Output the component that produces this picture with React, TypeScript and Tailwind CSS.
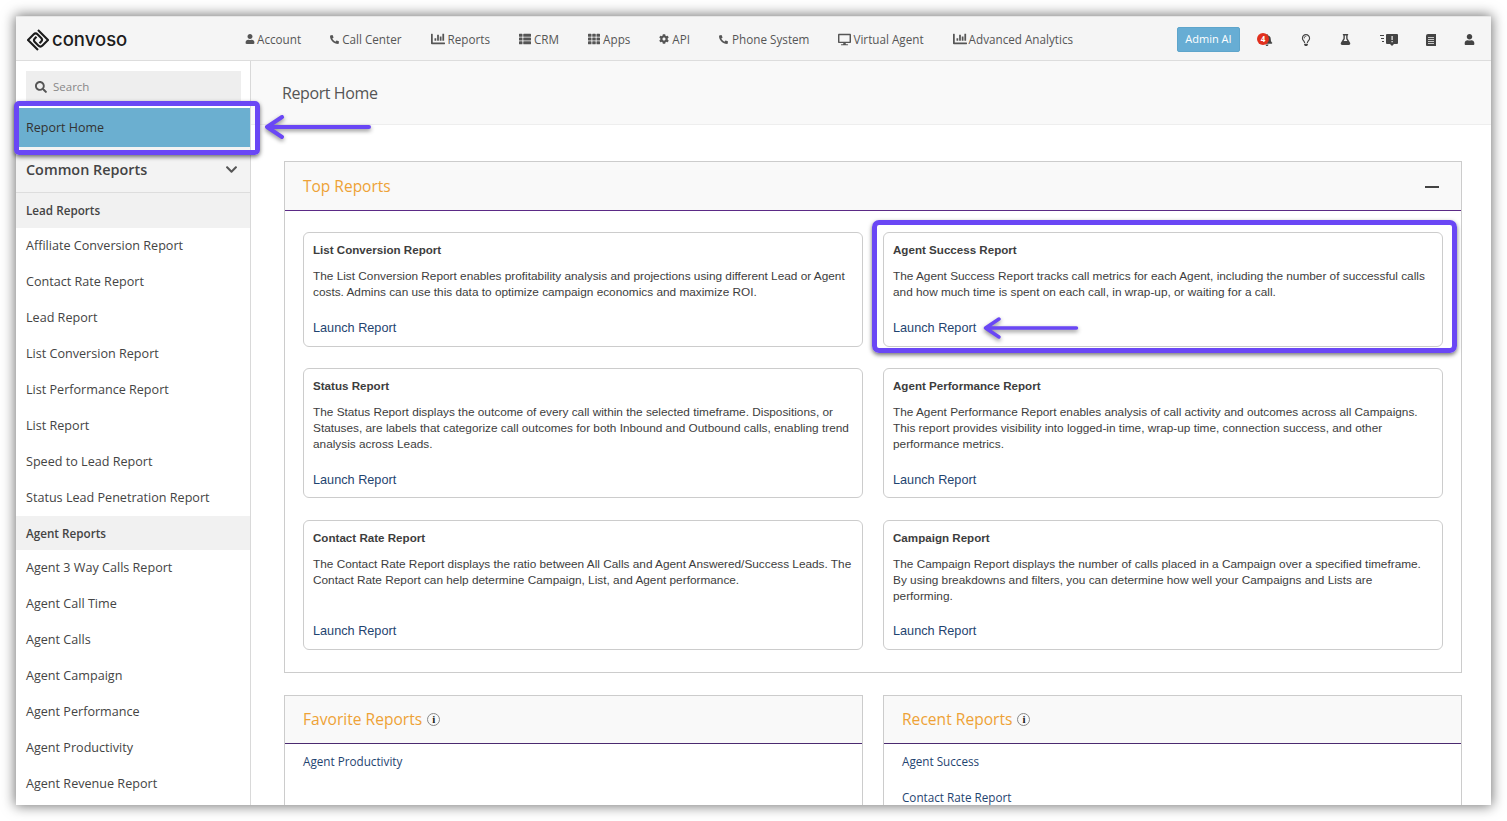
import {
  FaBell,
  FaChartBar,
  FaChevronDown,
  FaCog,
  FaDesktop,
  FaFlask,
  FaPhone,
  FaRegLightbulb,
  FaSearch,
  FaTh,
  FaThList,
  FaUser,
} from 'react-icons/fa';
import type { ReactNode } from 'react';

const navItems: { icon: ReactNode; label: string; box: string }[] = [
  { icon: <FaUser size={10} />, label: 'Account', box: 'w-[12px]' },
  { icon: <FaPhone size={9} className="-scale-x-100" />, label: 'Call Center', box: 'w-[12px]' },
  { icon: <FaChartBar size={14} />, label: 'Reports', box: 'w-[17px]' },
  { icon: <FaThList size={12} />, label: 'CRM', box: 'w-[15px]' },
  { icon: <FaTh size={12} />, label: 'Apps', box: 'w-[15px]' },
  { icon: <FaCog size={10} />, label: 'API', box: 'w-[13px]' },
  { icon: <FaPhone size={9} className="-scale-x-100" />, label: 'Phone System', box: 'w-[13px]' },
  { icon: <FaDesktop size={13} />, label: 'Virtual Agent', box: 'w-[15px]' },
  { icon: <FaChartBar size={14} />, label: 'Advanced Analytics', box: 'w-[16px]' },
];

const leadReports = [
  'Affiliate Conversion Report',
  'Contact Rate Report',
  'Lead Report',
  'List Conversion Report',
  'List Performance Report',
  'List Report',
  'Speed to Lead Report',
  'Status Lead Penetration Report',
];

const agentReports = [
  'Agent 3 Way Calls Report',
  'Agent Call Time',
  'Agent Calls',
  'Agent Campaign',
  'Agent Performance',
  'Agent Productivity',
  'Agent Revenue Report',
];

const reportCards = [
  {
    title: 'List Conversion Report',
    text: 'The List Conversion Report enables profitability analysis and projections using different Lead or Agent costs. Admins can use this data to optimize campaign economics and maximize ROI.',
    size: 'h-[115px] pb-[10px]',
  },
  {
    title: 'Agent Success Report',
    text: 'The Agent Success Report tracks call metrics for each Agent, including the number of successful calls and how much time is spent on each call, in wrap-up, or waiting for a call.',
    size: 'h-[115px] pb-[10px]',
  },
  {
    title: 'Status Report',
    text: 'The Status Report displays the outcome of every call within the selected timeframe. Dispositions, or Statuses, are labels that categorize call outcomes for both Inbound and Outbound calls, enabling trend analysis across Leads.',
    size: 'h-[130px] pb-[9px]',
  },
  {
    title: 'Agent Performance Report',
    text: 'The Agent Performance Report enables analysis of call activity and outcomes across all Campaigns. This report provides visibility into logged-in time, wrap-up time, connection success, and other performance metrics.',
    size: 'h-[130px] pb-[9px]',
  },
  {
    title: 'Contact Rate Report',
    text: 'The Contact Rate Report displays the ratio between All Calls and Agent Answered/Success Leads. The Contact Rate Report can help determine Campaign, List, and Agent performance.',
    size: 'h-[130px] pb-[10px] mt-[1px]',
  },
  {
    title: 'Campaign Report',
    text: 'The Campaign Report displays the number of calls placed in a Campaign over a specified timeframe. By using breakdowns and filters, you can determine how well your Campaigns and Lists are performing.',
    size: 'h-[130px] pb-[10px] mt-[1px]',
  },
];

function Logo() {
  return (
    <svg width="22" height="22" viewBox="0 0 22 22" fill="none" stroke="#1c1c1c" strokeWidth="2.100" strokeLinejoin="round">
      <path d="M11 1 21 11l-5.500 5.500a3 3 0 0 1-4.200 0L7.800 13a2.500 2.500 0 0 1 0-3.500l1.700-1.700" />
      <path d="M11 21 1 11l5.500-5.500a3 3 0 0 1 4.200 0l3.500 3.500a2.500 2.500 0 0 1 0 3.500l-1.700 1.700" />
    </svg>
  );
}

function Arrow({ className }: { className: string }) {
  return (
    <svg
      className={className}
      width="110"
      height="30"
      viewBox="0 0 110 30"
      fill="none"
      stroke="#6a47f5"
      strokeWidth="4"
      strokeLinecap="round"
      strokeLinejoin="round"
    >
      <path d="M4 15H106M19 5 4 15l15 10" />
    </svg>
  );
}

function InfoIcon() {
  return (
    <span className="flex h-[13px] w-[13px] items-center justify-center rounded-full border border-[#888] font-['Liberation_Serif',serif] text-[11px] leading-none font-bold text-[#222]">
      i
    </span>
  );
}

function SideLink({ label }: { label: string }) {
  return <div className="flex h-[36px] items-center pl-[10px] text-[12.6px] text-[#444]">{label}</div>;
}

function SideGroup({ label, h }: { label: string; h: string }) {
  return (
    <div className={`flex items-center bg-[#f1f1f1] pt-[1px] pl-[10px] text-[11.7px] font-semibold text-[#444] ${h}`}>
      {label}
    </div>
  );
}

function Card({ title, text, size }: { title: string; text: string; size: string }) {
  return (
    <div
      className={`flex flex-col justify-between rounded-[6px] border border-[#ccc] bg-white px-[9px] pt-[9px] font-['Liberation_Sans',sans-serif] text-[11.82px] leading-[16px] text-[#3d3d3d] ${size}`}
    >
      <div>
        <div className="text-[11.6px] font-bold">{title}</div>
        <p className="mt-[10px]">{text}</p>
      </div>
      <a className="text-[12.7px] text-[#1f4470]">Launch Report</a>
    </div>
  );
}

function PanelHead({ title }: { title: string }) {
  return (
    <div className="flex h-[48px] shrink-0 items-center gap-[5px] border-b border-[#4b2a70] bg-[#f9f9f9] px-[18px]">
      <span className="text-[15.6px] text-[#eea236]">{title}</span>
      <InfoIcon />
    </div>
  );
}

export default function App() {
  return (
    <div className="relative h-[821px] w-[1507px] overflow-hidden bg-white pt-[16px] pr-[16px] pb-[16px] pl-[16px] font-['Open_Sans',sans-serif]">
      <div className="flex h-full flex-col overflow-hidden border-t border-[#e6e6e6] bg-white shadow-[0_0_12px_1px_rgba(0,0,0,0.55)]">
        <header className="flex h-[44px] shrink-0 items-center border-b border-[#ddd] bg-[#f5f5f5] pt-[2px] pr-[16px] pl-[11px]">
          <div className="flex w-[218px] shrink-0 items-center gap-[3px]">
            <Logo />
            <span className="font-['Inter',sans-serif] text-[18.5px] leading-none font-medium text-[#1c1c1c]">
              convoso
            </span>
          </div>
          <nav className="flex items-center gap-[29px] text-[11.7px] text-[#555]">
            {navItems.map((item) => (
              <span key={item.label} className="flex items-center">
                <span className={`flex shrink-0 ${item.box}`}>{item.icon}</span>
                {item.label}
              </span>
            ))}
          </nav>
          <button className="ml-auto h-[25px] w-[63px] rounded-[2px] border border-[#5ea5cb] bg-[#67add4] text-[11px] text-white">
            Admin AI
          </button>
          <div className="relative ml-[17px] flex w-[16px] justify-end text-[#444]">
            <FaBell size={12} />
            <span className="absolute -top-[1px] left-0 flex h-[12px] w-[12px] items-center justify-center rounded-full bg-[#e1301e] text-[8px] font-bold text-white">
              4
            </span>
          </div>
          <FaRegLightbulb size={12} className="ml-[27px] text-[#444]" />
          <FaFlask size={11} className="ml-[28px] text-[#444]" />
          <svg className="ml-[29px]" width="18" height="13" viewBox="0 0 18 13" fill="#444">
            <path d="M7 1h10a1 1 0 0 1 1 1v8a1 1 0 0 1-1 1h-3l-2 2-2-2H7a1 1 0 0 1-1-1V2a1 1 0 0 1 1-1Z" />
            <path d="M0 2h4v1H0zM1 5h3v1H1zM2 8h2v1H2z" />
            <path d="M11.500 3h1.200v4h-1.200zM11.500 8h1.200v1.200h-1.200z" fill="#f5f5f5" />
          </svg>
          <svg className="ml-[28px]" width="10" height="12" viewBox="0 0 10 12" fill="#444">
            <path d="M2 0h8v12H1a1 1 0 0 1-1-1V2a2 2 0 0 1 2-2Z" />
            <path d="M2 3h6v.8H2zM2 5h6v.8H2zM2 7h6v.8H2zM2 9h6v.8H2z" fill="#f5f5f5" />
          </svg>
          <FaUser size={11} className="ml-[28px] text-[#444]" />
        </header>

        <div className="flex min-h-0 flex-1">
          <aside className="w-[235px] shrink-0 overflow-hidden border-r border-[#d9d9d9] bg-white">
            <div className="px-[10px] pt-[10px] pb-[7px]">
              <div className="flex h-[30px] w-[215px] items-center gap-[6px] bg-[#eee] pt-[1px] pl-[9px] text-[11.5px] text-[#888]">
                <FaSearch size={12} className="text-[#555]" />
                Search
              </div>
            </div>
            <div className="flex h-[39px] items-center bg-[#6bafd0] pt-[1px] pl-[10px] text-[12.5px] text-[#333]">
              Report Home
            </div>
            <div className="flex h-[46px] items-center justify-between border-b border-[#ddd] bg-[#f3f3f3] pr-[12px] pl-[10px] text-[14.4px] font-semibold text-[#444]">
              Common Reports
              <FaChevronDown size={13} className="text-[#555]" />
            </div>
            <SideGroup label="Lead Reports" h="h-[35px]" />
            {leadReports.map((r) => (
              <SideLink key={r} label={r} />
            ))}
            <SideGroup label="Agent Reports" h="h-[34px]" />
            {agentReports.map((r) => (
              <SideLink key={r} label={r} />
            ))}
          </aside>

          <main className="flex min-w-0 flex-1 flex-col overflow-hidden bg-white">
            <div className="flex h-[64px] shrink-0 items-center border-b border-[#eee] bg-[#f9f9f9] pl-[31px] text-[16px] tracking-[-0.4px] text-[#555]">
              Report Home
            </div>
            <div className="flex flex-col gap-[22px] pt-[36px] pr-[29px] pl-[33px]">
              <section className="border border-[#ccc]">
                <div className="flex h-[49px] items-center justify-between border-b border-[#5b2a86] bg-[#f9f9f9] pt-[1px] pr-[22px] pl-[18px]">
                  <span className="text-[15.5px] text-[#eea236]">Top Reports</span>
                  <span className="h-[2px] w-[14px] bg-[#444]" />
                </div>
                <div className="grid grid-cols-2 gap-x-[20px] gap-y-[21px] px-[18px] pt-[21px] pb-[22px]">
                  {reportCards.map((c) => (
                    <Card key={c.title} title={c.title} text={c.text} size={c.size} />
                  ))}
                </div>
              </section>
              <div className="grid grid-cols-2 gap-[20px]">
                <section className="h-[200px] border border-[#ccc]">
                  <PanelHead title="Favorite Reports" />
                  <div className="px-[18px] pt-[10px] text-[11.7px] leading-[14px] text-[#1f4470]">Agent Productivity</div>
                </section>
                <section className="h-[200px] border border-[#ccc]">
                  <PanelHead title="Recent Reports" />
                  <div className="flex flex-col gap-[22px] px-[18px] pt-[10px] text-[11.7px] leading-[14px] text-[#1f4470]">
                    <span>Agent Success</span>
                    <span>Contact Rate Report</span>
                  </div>
                </section>
              </div>
            </div>
          </main>
        </div>
      </div>

      <div className="absolute top-[101px] left-[14px] h-[54px] w-[246px] rounded-[5px] border-[5px] border-[#6a47f5] shadow-[0_2px_4px_rgba(0,0,0,0.55)]" />
      <div className="absolute top-[220px] left-[872px] h-[133px] w-[585px] rounded-[7px] border-[5px] border-[#6a47f5] shadow-[0_2px_4px_rgba(0,0,0,0.55)]" />
      <Arrow className="absolute top-[112px] left-[263px] drop-shadow-[0_2px_2px_rgba(0,0,0,0.45)]" />
      <Arrow className="absolute top-[313px] left-[982px] h-[30px] w-[98px] drop-shadow-[0_2px_2px_rgba(0,0,0,0.45)]" />
    </div>
  );
}
